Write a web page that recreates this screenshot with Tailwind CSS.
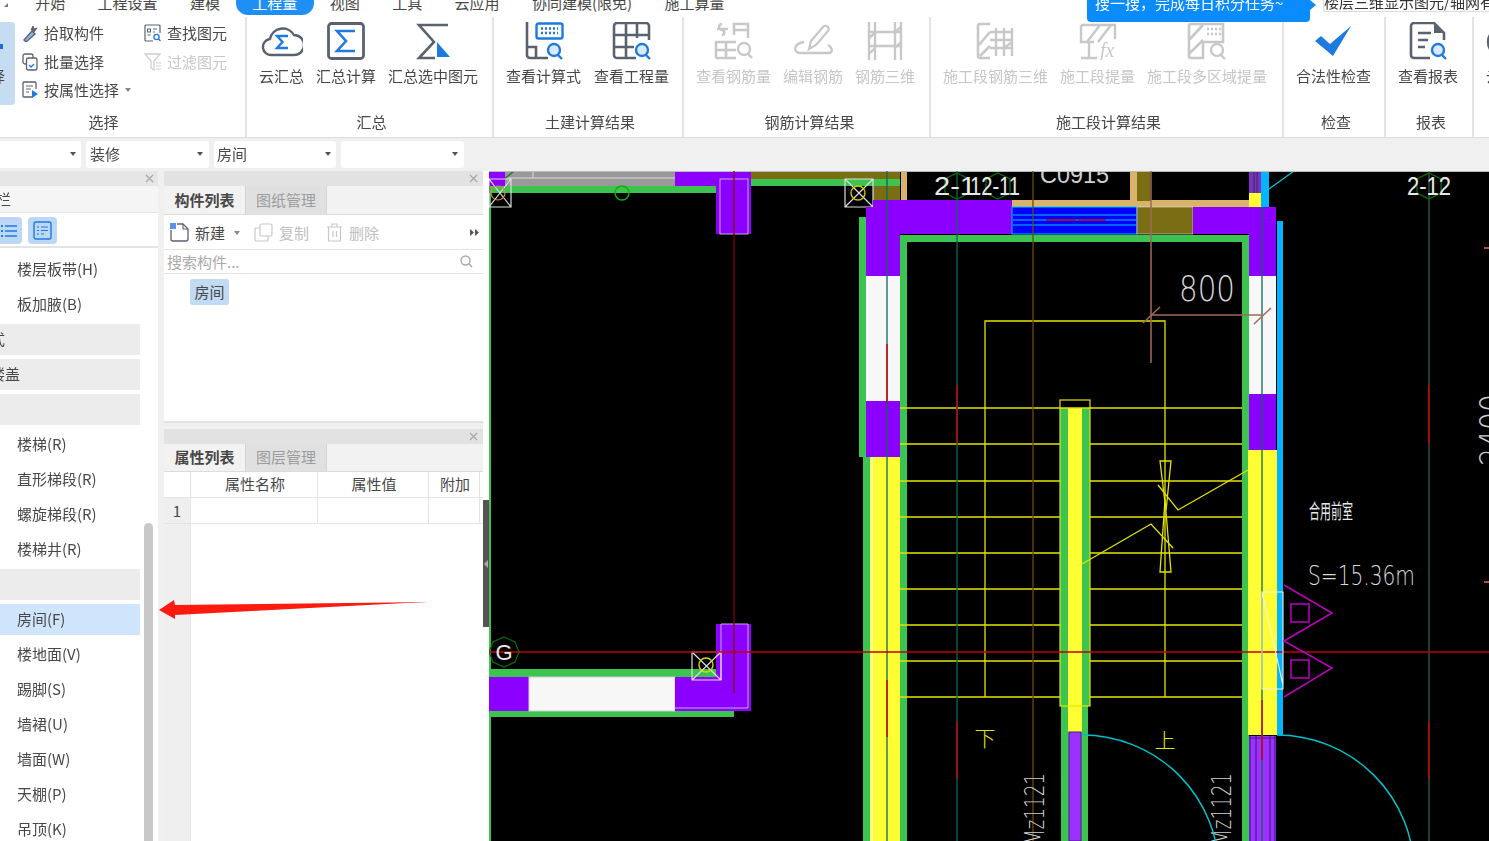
<!DOCTYPE html>
<html>

<head>
    <meta charset="UTF-8">
    <script src="https://cdn.jsdelivr.net/npm/@tailwindcss/browser@4"></script>
</head>

<body class="relative h-[841px] w-[1489px] overflow-hidden bg-[#f0f0f0] text-[15px] leading-[20px] text-[#484848] blur-[0.35px] font-['Noto_Sans_CJK_SC','Liberation_Sans',sans-serif]">

    <!-- Menu tabs -->
    <div class="relative -mt-[9px] flex h-[23px] items-center bg-white pl-[19px] whitespace-nowrap">
        <span class="absolute left-[4px] top-[12px] h-0 w-0 border-b-[4px] border-l-[4px] border-b-[#777] border-l-transparent"></span>
        <span class="px-[16.2px]">开始</span>
        <span class="px-[16.2px]">工程设置</span>
        <span class="px-[16.2px]">建模</span>
        <span class="rounded-b-[12px] bg-[#1f8ff5] px-[16.2px] py-[2px] text-white">工程量</span>
        <span class="px-[16.2px]">视图</span>
        <span class="px-[16.2px]">工具</span>
        <span class="px-[16.2px]">云应用</span>
        <span class="px-[16.2px]">协同建模(限免)</span>
        <span class="px-[16.2px]">施工算量</span>
    </div>

    <!-- Ribbon -->
    <div class="flex h-[124px] border-b border-[#dcdcdc] bg-white pt-[3px] whitespace-nowrap">
        <!-- Selection group -->
        <div class="-ml-10 flex w-[287px] shrink-0 flex-col border-r-2 border-[#e4e4e4]">
            <div class="flex h-[92px] pt-[5px]">
                <div class="flex h-[83px] w-[55px] flex-col items-end rounded-[4px] bg-[#c6dcf3] pt-[22px]">
                    <span class="mr-[12px] mb-[17px] h-[5px] w-[3px] bg-[#1f6fd0]"></span>
                    <span class="mr-[10px] text-[#484848]">择</span>
                </div>
                <div class="ml-[7px] flex w-[122px] flex-col gap-[8.5px] pt-[1px]">
                    <div class="flex h-5 items-center gap-[6px]">
                        <svg class="h-[18px] w-[16px]" viewBox="0 0 16 18" fill="none"><path d="M2 16l8-9 3 3-9 8z" fill="#8fb8e8" stroke="#5a6270" stroke-width="1.4"/><path d="M9 6l2-4 1 3 3-1-3 4" fill="#5a6270" stroke="#5a6270"/></svg>
                        <span>拾取构件</span>
                    </div>
                    <div class="flex h-5 items-center gap-[6px]">
                        <svg class="h-[18px] w-[16px]" viewBox="0 0 16 18" fill="none"><rect x="1" y="1" width="10" height="10" rx="2" stroke="#5a6270" stroke-width="1.3"/><rect x="4.5" y="5" width="10.5" height="12" rx="2" fill="#fff" stroke="#5a6270" stroke-width="1.3"/><path d="M7 12l2 2 3-3" stroke="#1f7ae0" stroke-width="1.3"/></svg>
                        <span>批量选择</span>
                    </div>
                    <div class="flex h-5 items-center gap-[6px]">
                        <svg class="h-[18px] w-[16px]" viewBox="0 0 16 18" fill="none"><path d="M11 16H2a1 1 0 0 1-1-1V2a1 1 0 0 1 1-1h11a1 1 0 0 1 1 1v6" stroke="#5a6270" stroke-width="1.3"/><path d="M4 5h7M4 8h5M4 11h3" stroke="#5a6270" stroke-width="1.2"/><path d="M10 9l6 4-6 4z" fill="#1f7ae0"/></svg>
                        <span class="flex items-center gap-[6px]">按属性选择<span class="h-0 w-0 border-x-[3px] border-t-[4px] border-x-transparent border-t-[#888]"></span></span>
                    </div>
                </div>
                <div class="flex flex-col gap-[8.5px] pt-[1px]">
                    <div class="flex h-5 items-center gap-[5px]">
                        <svg class="h-[18px] w-[18px]" viewBox="0 0 18 18" fill="none"><path d="M16 9V2a1 1 0 0 0-1-1H2a1 1 0 0 0-1 1v14a1 1 0 0 0 1 1h7" stroke="#5a6270" stroke-width="1.2"/><path d="M3.5 5h3v3h-3zM9 5h4M3.5 11h3M9 8h2" stroke="#5a6270" stroke-width="1.1"/><circle cx="12.5" cy="13" r="2.6" stroke="#1f7ae0" stroke-width="1.3"/><path d="M14.5 15l2 2" stroke="#1f7ae0" stroke-width="1.3"/></svg>
                        <span>查找图元</span>
                    </div>
                    <div class="flex h-5 items-center gap-[5px] text-[#c6c6c6]">
                        <svg class="h-[18px] w-[18px]" viewBox="0 0 18 18" fill="none"><path d="M1 1h15l-6 7v9l-3-2V8z" stroke="#cfcfcf" stroke-width="1.3"/><path d="M12 10h5M12 13h5M12 16h5" stroke="#cfcfcf" stroke-width="1.2"/></svg>
                        <span>过滤图元</span>
                    </div>
                </div>
            </div>
            <div class="pl-[2px] pt-[3px] text-center">选择</div>
        </div>

        <!-- Summary group -->
        <div class="flex w-[247px] shrink-0 flex-col border-r-2 border-[#e4e4e4]">
            <div class="flex h-[92px] gap-3 pl-3 pt-[5px]">
                <div class="flex flex-col items-center">
                    <svg class="mb-[6px] h-[38px] w-[42px]" viewBox="0 0 42 38" fill="none"><path d="M11 33a8 8 0 0 1-2-16A13 13 0 0 1 33 13a10 10 0 0 1 0 20z" stroke="#5a6270" stroke-width="2.4"/><path d="M27 14H16l5.500 6-5.500 6h11" stroke="#1f7ae0" stroke-width="2.400"/></svg>
                    <span>云汇总</span>
                </div>
                <div class="flex flex-col items-center">
                    <svg class="mb-[6px] h-[38px] w-[38px]" viewBox="0 0 38 38" fill="none"><rect x="1.500" y="1.500" width="35" height="35" rx="3" stroke="#5a6270" stroke-width="2.800"/><path d="M28 9H10l9 10-9 10h18" stroke="#1f7ae0" stroke-width="2.600"/></svg>
                    <span>汇总计算</span>
                </div>
                <div class="flex flex-col items-center">
                    <svg class="mb-[6px] h-[38px] w-[36px]" viewBox="0 0 36 38" fill="none"><path d="M33 3H4l15 17L4 36h16" stroke="#5a6270" stroke-width="2.600"/><path d="M22 20l13 15H22z" fill="#1f7ae0"/></svg>
                    <span>汇总选中图元</span>
                </div>
            </div>
            <div class="pl-[4px] pt-[3px] text-center">汇总</div>
        </div>

        <!-- Civil results -->
        <div class="flex w-[190px] shrink-0 flex-col border-r-2 border-[#e4e4e4]">
            <div class="flex h-[92px] gap-[13px] pl-3 pt-[5px]">
                <div class="flex flex-col items-center">
                    <svg class="mb-[6px] h-[38px] w-[40px]" viewBox="0 0 40 38" fill="none"><path d="M3 0v33a3 3 0 0 0 3 3h18M3 25h9v11" stroke="#5a6270" stroke-width="2.600"/><rect x="12.500" y="1.500" width="26" height="15" rx="2" stroke="#1f7ae0" stroke-width="2.400"/><path d="M17 6.500h17M17 11h17" stroke="#1f7ae0" stroke-width="2.400" stroke-dasharray="2 2"/><circle cx="30" cy="28" r="6" fill="#dbe9fa" stroke="#1f7ae0" stroke-width="2.400"/><path d="M34 33l4 4" stroke="#1f7ae0" stroke-width="2.400"/></svg>
                    <span>查看计算式</span>
                </div>
                <div class="flex flex-col items-center">
                    <svg class="mb-[6px] h-[38px] w-[40px]" viewBox="0 0 40 38" fill="none"><path d="M24 36H5a3 3 0 0 1-3-3V4a3 3 0 0 1 3-3h29a3 3 0 0 1 3 3v14M2 13h35M2 25h20M14 1v35M25 1v15" stroke="#5a6270" stroke-width="2.600"/><circle cx="30" cy="28" r="6" fill="#dbe9fa" stroke="#1f7ae0" stroke-width="2.400"/><path d="M34 33l4 4" stroke="#1f7ae0" stroke-width="2.400"/></svg>
                    <span>查看工程量</span>
                </div>
            </div>
            <div class="pl-[4px] pt-[3px] text-center">土建计算结果</div>
        </div>

        <!-- Rebar results -->
        <div class="flex w-[247px] shrink-0 flex-col border-r-2 border-[#e4e4e4]">
            <div class="flex h-[92px] gap-3 pl-3 pt-[5px] text-[#c6c6c6]">
                <div class="flex flex-col items-center">
                    <svg class="mb-[6px] h-[38px] w-[40px]" viewBox="0 0 40 38" fill="none"><path d="M3 7h11M8 2a3 3 0 0 0 0 6c3 0 3 5 0 5M20 13V2h14v14M20 8h14M2 36V20h20M2 28h20M12 20v16M2 36h20" stroke="#c8c8c8" stroke-width="2.600"/><circle cx="30" cy="27" r="6" stroke="#c8c8c8" stroke-width="2.400"/><path d="M34 32l4 4" stroke="#c8c8c8" stroke-width="2.400"/></svg>
                    <span>查看钢筋量</span>
                </div>
                <div class="flex flex-col items-center">
                    <svg class="mb-[6px] h-[38px] w-[40px]" viewBox="0 0 40 38" fill="none"><path d="M16 27l2-8L30 5a3 3 0 0 1 5 4L23 23z" stroke="#c8c8c8" stroke-width="2.200"/><path d="M11 20c-12 2-10 11-4 11h28c6 0 4-6 0-8" stroke="#c8c8c8" stroke-width="2.400"/></svg>
                    <span>编辑钢筋</span>
                </div>
                <div class="flex flex-col items-center">
                    <svg class="mb-[6px] h-[38px] w-[40px]" viewBox="0 0 40 38" fill="none"><path d="M4 0v38M36 0v38M30 0v38M10 0v38M4 10h32M4 24h32M4 16l6-5M30 10l6-5M4 32l6-6M30 26l6-6" stroke="#c8c8c8" stroke-width="2.400"/></svg>
                    <span>钢筋三维</span>
                </div>
            </div>
            <div class="pl-[6px] pt-[3px] text-center">钢筋计算结果</div>
        </div>

        <!-- Construction stage results -->
        <div class="flex w-[353px] shrink-0 flex-col border-r-2 border-[#e4e4e4]">
            <div class="flex h-[92px] gap-3 pl-3 pt-[5px] text-[#c6c6c6]">
                <div class="flex flex-col items-center">
                    <svg class="mb-[6px] h-[38px] w-[40px]" viewBox="0 0 40 38" fill="none"><path d="M14 36H4a2 2 0 0 1-2-2V4a2 2 0 0 1 2-2h10M2 24L14 10M4 34L14 24" stroke="#c8c8c8" stroke-width="2.600"/><path d="M14 10h22M14 18h22M14 26h22M20 6v28M28 6v28M36 6v28M28 26l8-6" stroke="#c8c8c8" stroke-width="2.400"/></svg>
                    <span>施工段钢筋三维</span>
                </div>
                <div class="flex flex-col items-center">
                    <svg class="mb-[6px] h-[38px] w-[40px]" viewBox="0 0 40 38" fill="none"><path d="M3 3h34v14M3 3v17h13M9 20L22 3M20 20L33 3M3 36h16M11 20v16" stroke="#c8c8c8" stroke-width="2.400"/><text x="22" y="35" font-family="Liberation Serif" font-style="italic" font-size="20" fill="#c8c8c8">fx</text></svg>
                    <span>施工段提量</span>
                </div>
                <div class="flex flex-col items-center">
                    <svg class="mb-[6px] h-[38px] w-[40px]" viewBox="0 0 40 38" fill="none"><path d="M16 36H4a2 2 0 0 1-2-2V4a2 2 0 0 1 2-2h32v18H16zM2 18L16 3M2 32L16 18" stroke="#c8c8c8" stroke-width="2.600"/><path d="M20 7h14M20 12h14" stroke="#c8c8c8" stroke-width="2.400" stroke-dasharray="2 2"/><circle cx="30" cy="28" r="6" stroke="#c8c8c8" stroke-width="2.400"/><path d="M34 33l4 4" stroke="#c8c8c8" stroke-width="2.400"/></svg>
                    <span>施工段多区域提量</span>
                </div>
            </div>
            <div class="pl-[4px] pt-[3px] text-center">施工段计算结果</div>
        </div>

        <!-- Check -->
        <div class="flex w-[102px] shrink-0 flex-col border-r-2 border-[#e4e4e4]">
            <div class="flex h-[92px] pl-3 pt-[5px]">
                <div class="flex flex-col items-center">
                    <svg class="mb-[6px] h-[38px] w-[40px]" viewBox="0 0 40 38"><path d="M1 19l6-5 9 8L37 4 19 34z" fill="#1f7ae0"/></svg>
                    <span>合法性检查</span>
                </div>
            </div>
            <div class="pl-[4px] pt-[3px] text-center">检查</div>
        </div>

        <!-- Report -->
        <div class="flex w-[88px] shrink-0 flex-col border-r-2 border-[#e4e4e4]">
            <div class="flex h-[92px] pl-3 pt-[5px]">
                <div class="flex flex-col items-center">
                    <svg class="mb-[6px] h-[38px] w-[40px]" viewBox="0 0 40 38" fill="none"><path d="M22 36H6a3 3 0 0 1-3-3V4a3 3 0 0 1 3-3h20l10 10v7" stroke="#5a6270" stroke-width="2.600"/><path d="M26 1v10h10" fill="#5a6270"/><path d="M10 11h13M10 18h10M10 25h7" stroke="#5a6270" stroke-width="2.400"/><circle cx="30" cy="28" r="6" fill="#dbe9fa" stroke="#1f7ae0" stroke-width="2.400"/><path d="M34 33l4 4" stroke="#1f7ae0" stroke-width="2.400"/></svg>
                    <span>查看报表</span>
                </div>
            </div>
            <div class="pl-[4px] pt-[3px] text-center">报表</div>
        </div>

        <div class="flex flex-1 flex-col overflow-hidden pl-3 pt-[5px]">
            <svg class="mb-[6px] h-[38px] w-[40px] shrink-0" viewBox="0 0 40 38" fill="none"><circle cx="16" cy="20" r="14" stroke="#5a6270" stroke-width="2.400"/></svg>
            <span>云检查</span>
        </div>
    </div>

    <!-- Floor / type selectors -->
    <div class="flex h-[32px] items-center gap-[5px] pl-0">
        <div class="-ml-4 flex h-[27px] w-[97px] items-center justify-end rounded-[3px] bg-white pr-[5px]"><span class="h-0 w-0 border-x-[3px] border-t-[4px] border-x-transparent border-t-[#555]"></span></div>
        <div class="flex h-[27px] w-[123px] items-center justify-between rounded-[3px] bg-white pl-1 pr-[6px]">装修<span class="h-0 w-0 border-x-[3px] border-t-[4px] border-x-transparent border-t-[#555]"></span></div>
        <div class="flex h-[27px] w-[122px] items-center justify-between rounded-[3px] bg-white pl-[3px] pr-[5px]">房间<span class="h-0 w-0 border-x-[3px] border-t-[4px] border-x-transparent border-t-[#555]"></span></div>
        <div class="flex h-[27px] w-[123px] items-center justify-end rounded-[3px] bg-white pr-[6px]"><span class="h-0 w-0 border-x-[3px] border-t-[4px] border-x-transparent border-t-[#555]"></span></div>
    </div>

    <!-- Main area -->
    <div class="flex h-[671px] pt-[1px]">
        <!-- Navigation panel -->
        <div class="flex w-[158px] shrink-0 flex-col bg-white">
            <div class="flex h-[15px] items-center justify-end bg-[#e6e6e6] pr-[4px] text-[#a8a8a8]">
                <svg class="h-[9px] w-[9px]" viewBox="0 0 9 9"><path d="M1 1l7 7M8 1L1 8" stroke="#a8a8a8" stroke-width="1.300"/></svg>
            </div>
            <div class="flex h-[27px] items-center border-b border-[#e4e4e4] bg-[#f5f5f5]"><span class="-ml-[4px]">栏</span></div>
            <div class="flex h-[35px] items-center gap-[6px] border-b-2 border-[#e4e4e4] pt-[2px]">
                <div class="flex h-[27px] w-[22px] items-center justify-end rounded-r-[4px] bg-[#bcd8f6] pr-[5px]">
                    <svg class="h-[16px] w-[16px]" viewBox="0 0 16 16"><path d="M0 3h2M0 8h2M0 13h2" stroke="#1f7ae0" stroke-width="2"/><path d="M4 3h12M4 8h12M4 13h12" stroke="#1f7ae0" stroke-width="1.400"/></svg>
                </div>
                <div class="flex h-[27px] w-[29px] items-center justify-center rounded-[4px] bg-[#bcd8f6]">
                    <svg class="h-[19px] w-[19px]" viewBox="0 0 19 19" fill="none"><rect x="1" y="1" width="17" height="17" rx="2" stroke="#1f7ae0" stroke-width="1.400"/><path d="M4 6h2M8 6h7M4 9.500h2M8 9.500h7M4 13h2M8 13h3" stroke="#1f7ae0" stroke-width="1.200"/></svg>
                </div>
            </div>
            <div class="flex min-h-0 flex-1 overflow-hidden">
                <div class="flex w-[140px] shrink-0 flex-col gap-[4px] pt-[6px]">
                    <div class="flex h-[31px] shrink-0 items-center pb-[2px] pl-[17px]">楼层板带(H)</div>
                    <div class="flex h-[31px] shrink-0 items-center pb-[2px] pl-[17px]">板加腋(B)</div>
                    <div class="flex h-[31px] shrink-0 items-center bg-[#ececec] pb-[2px]"><span class="-ml-[10px]">式</span></div>
                    <div class="flex h-[31px] shrink-0 items-center justify-start bg-[#ececec] pb-[2px]"><span class="-ml-[10px]">楼盖</span></div>
                    <div class="h-[31px] shrink-0 bg-[#ececec]"></div>
                    <div class="flex h-[31px] shrink-0 items-center pb-[2px] pl-[17px]">楼梯(R)</div>
                    <div class="flex h-[31px] shrink-0 items-center pb-[2px] pl-[17px]">直形梯段(R)</div>
                    <div class="flex h-[31px] shrink-0 items-center pb-[2px] pl-[17px]">螺旋梯段(R)</div>
                    <div class="flex h-[31px] shrink-0 items-center pb-[2px] pl-[17px]">楼梯井(R)</div>
                    <div class="h-[31px] shrink-0 bg-[#ececec]"></div>
                    <div class="flex h-[31px] shrink-0 items-center bg-[#cfe5fb] pb-[2px] pl-[17px]">房间(F)</div>
                    <div class="flex h-[31px] shrink-0 items-center pb-[2px] pl-[17px]">楼地面(V)</div>
                    <div class="flex h-[31px] shrink-0 items-center pb-[2px] pl-[17px]">踢脚(S)</div>
                    <div class="flex h-[31px] shrink-0 items-center pb-[2px] pl-[17px]">墙裙(U)</div>
                    <div class="flex h-[31px] shrink-0 items-center pb-[2px] pl-[17px]">墙面(W)</div>
                    <div class="flex h-[31px] shrink-0 items-center pb-[2px] pl-[17px]">天棚(P)</div>
                    <div class="flex h-[31px] shrink-0 items-center pb-[2px] pl-[17px]">吊顶(K)</div>
                </div>
                <div class="ml-1 mt-[275px] h-[400px] w-[9px] rounded-[5px] bg-[#c8c8c8]"></div>
            </div>
        </div>

        <div class="w-[6px] shrink-0"></div>

        <!-- Component list and properties -->
        <div class="flex w-[319px] shrink-0 flex-col">
            <div class="flex h-[15px] items-center justify-end bg-[#e2e2e2] pr-[5px]">
                <svg class="h-[9px] w-[9px]" viewBox="0 0 9 9"><path d="M1 1l7 7M8 1L1 8" stroke="#a8a8a8" stroke-width="1.300"/></svg>
            </div>
            <div class="flex h-[29px] border-b border-[#dcdcdc] bg-[#f2f2f2]">
                <div class="flex w-[81px] items-center justify-center font-bold">构件列表</div>
                <div class="flex w-[82px] items-center justify-center border-x border-[#d4d4d4] bg-[#e0e0e0] text-[#9c9c9c]">图纸管理</div>
            </div>
            <div class="flex h-[35px] items-center border-b border-[#e4e4e4] bg-white pl-[6px] pt-[1px]">
                <svg class="h-[19px] w-[19px]" viewBox="0 0 19 19" fill="none"><path d="M1 7v9a2 2 0 0 0 2 2h13a2 2 0 0 0 2-2V6l-5-5H7" stroke="#5a6270" stroke-width="1.300"/><path d="M13 1v5h5" stroke="#5a6270" stroke-width="1.100"/><rect x="0" y="0" width="6" height="6" fill="#5b93ea"/></svg>
                <span class="ml-[6px]">新建</span>
                <span class="ml-[9px] h-0 w-0 border-x-[3px] border-t-[4px] border-x-transparent border-t-[#888]"></span>
                <svg class="ml-[14px] h-[19px] w-[19px]" viewBox="0 0 19 19" fill="none"><rect x="6" y="1" width="12" height="12" rx="1.500" stroke="#c8c8c8" stroke-width="1.200"/><path d="M6 5H2a1 1 0 0 0-1 1v11a1 1 0 0 0 1 1h11a1 1 0 0 0 1-1v-4" stroke="#c8c8c8" stroke-width="1.200"/></svg>
                <span class="ml-[6px] text-[#c0c0c0]">复制</span>
                <svg class="ml-[17px] h-[19px] w-[17px]" viewBox="0 0 17 19" fill="none"><path d="M1 4h15M6 4V1h5v3M2.500 4v14h12V4M7 8v6M10.500 8v6" stroke="#c8c8c8" stroke-width="1.200"/></svg>
                <span class="ml-[6px] text-[#c0c0c0]">删除</span>
                <div class="ml-auto mr-[3px] flex h-[23px] w-[12px] items-center justify-center rounded-[3px] bg-white">
                    <svg class="h-[7px] w-[9px]" viewBox="0 0 9 7"><path d="M0 0l4 3.500L0 7zM5 0l4 3.500L5 7z" fill="#555"/></svg>
                </div>
            </div>
            <div class="flex h-[24px] items-center justify-between border-b border-[#e4e4e4] bg-white pl-[3px] pr-[10px] text-[#aaa]">
                <span>搜索构件...</span>
                <svg class="h-[13px] w-[13px]" viewBox="0 0 13 13" fill="none"><circle cx="5.500" cy="5.500" r="4.500" stroke="#a8a8a8" stroke-width="1.400"/><path d="M9 9l3 3" stroke="#a8a8a8" stroke-width="1.400"/></svg>
            </div>
            <div class="h-[149px] border-b-2 border-[#e2e2e2] bg-white pl-[26px] pt-[5px]">
                <div class="flex h-[26px] w-[39px] items-center justify-center rounded-[3px] bg-[#c2daf3]">房间</div>
            </div>
            <div class="h-[6px]"></div>
            <div class="flex h-[15px] items-center justify-end bg-[#e2e2e2] pr-[5px]">
                <svg class="h-[9px] w-[9px]" viewBox="0 0 9 9"><path d="M1 1l7 7M8 1L1 8" stroke="#a8a8a8" stroke-width="1.300"/></svg>
            </div>
            <div class="flex h-[28px] border-b border-[#dcdcdc] bg-[#f2f2f2]">
                <div class="flex w-[81px] items-center justify-center pb-[2px] font-bold">属性列表</div>
                <div class="flex w-[82px] items-center justify-center border-x border-[#d4d4d4] bg-[#e0e0e0] pb-[2px] text-[#9c9c9c]">图层管理</div>
            </div>
            <div class="flex min-h-0 flex-1 flex-col bg-white">
                <div class="flex h-[26px] shrink-0 border-b border-[#e4e4e4]">
                    <div class="w-[27px] border-r border-[#e4e4e4]"></div>
                    <div class="flex w-[127px] items-center justify-center border-r border-[#e4e4e4] pb-[2px] pl-[2px]">属性名称</div>
                    <div class="flex w-[111px] items-center justify-center border-r border-[#e4e4e4] pb-[2px] pl-[2px]">属性值</div>
                    <div class="flex w-[51px] items-center justify-center border-r border-[#e4e4e4] pb-[2px] pl-[2px]">附加</div>
                </div>
                <div class="flex h-[26px] shrink-0 border-b border-[#e4e4e4]">
                    <div class="flex w-[27px] items-center justify-center border-r border-[#e4e4e4] bg-[#efefef]">1</div>
                    <div class="w-[127px] border-r border-[#e4e4e4]"></div>
                    <div class="w-[111px] border-r border-[#e4e4e4]"></div>
                    <div class="w-[51px] border-r border-[#e4e4e4]"></div>
                </div>
                <div class="w-[27px] flex-1 border-r border-[#e4e4e4] bg-[#efefef]"></div>
            </div>
        </div>

        <!-- Splitter -->
        <div class="flex w-[6px] shrink-0 flex-col bg-white">
            <div class="mt-[329px] flex h-[127px] items-center justify-center bg-[#555]">
                <span class="h-0 w-0 border-y-[4px] border-r-[4px] border-y-transparent border-r-[#aaa]"></span>
            </div>
        </div>

        <!-- CAD drawing -->
        <div class="min-w-0 flex-1 bg-black">
            <svg class="block h-[670px] w-[1000px]" viewBox="489 171 1000 670" font-family="Liberation Sans">
                <!-- upper left room edge -->
                <rect x="505" y="171" width="170" height="15" fill="#999"/>
                <path d="M489 178h186M533 171v7" stroke="#ddd" stroke-width="1"/>
                <path d="M494 176l8 5 12-10" fill="none" stroke="#1d7a2a" stroke-width="1.500"/>
                <rect x="489" y="171" width="16" height="15" fill="#8b00ff"/>
                <rect x="675" y="171" width="76" height="15" fill="#8b00ff"/>
                <rect x="716" y="171" width="35" height="63" fill="#8b00ff"/>
                <rect x="720" y="179" width="28" height="55" fill="none" stroke="#c9a8e8"/>
                <rect x="490" y="186" width="226" height="7" fill="#3cc350"/>
                <rect x="489" y="193" width="2" height="648" fill="#3cc350"/>
                <rect x="751" y="171" width="149" height="8" fill="#7a6e14"/>
                <rect x="751" y="179" width="149" height="7" fill="#3cc350"/>
                <rect x="873" y="186" width="27" height="14" fill="#7a6e14"/>
                <rect x="901" y="171" width="6" height="30" fill="#d9b36c"/>
                <path d="M489 179h22v28h-22zM489 179l22 28M511 179l-22 28" fill="none" stroke="#ddd" stroke-width="1.200"/>
                <circle cx="498" cy="193" r="7" fill="none" stroke="#d98a4a" stroke-width="1.200"/>
                <circle cx="622" cy="193" r="7" fill="none" stroke="#0cb10c" stroke-width="1.400"/>
                <path d="M845 179h28v28h-28zM845 179l28 28M873 179l-28 28" fill="none" stroke="#ddd" stroke-width="1.200"/>
                <circle cx="858" cy="193" r="7" fill="none" stroke="#d8c800" stroke-width="1.400"/>

                <!-- stair room walls, top -->
                <rect x="1012" y="200" width="238" height="7" fill="#d9b36c"/>
                <rect x="1130" y="171" width="7" height="30" fill="#d9b36c"/>
                <rect x="1137" y="171" width="13" height="30" fill="#7a6e14"/>
                <rect x="873" y="200" width="139" height="8" fill="#8b00ff"/>
                <rect x="866" y="207" width="146" height="27" fill="#8b00ff"/>
                <rect x="866" y="207" width="34" height="69" fill="#8b00ff"/>
                <rect x="1012" y="207" width="125" height="27" fill="#0000ff" stroke="#00c8ff"/>
                <path d="M1013 215h123M1013 220h123M1013 225h123" stroke="#00c8ff"/>
                <path d="M1046 220h30M1078 220h28" stroke="#c00000" stroke-width="1.400"/>
                <rect x="1137" y="207" width="56" height="27" fill="#7a6e14" stroke="#e0e0e0" stroke-width=".6"/>
                <rect x="1193" y="207" width="83" height="27" fill="#8b00ff"/>
                <rect x="1249" y="207" width="27" height="69" fill="#8b00ff"/>
                <rect x="1249" y="171" width="12" height="22" fill="#7a30c8"/>
                <rect x="1249" y="193" width="12" height="14" fill="#ffff33"/>
                <rect x="1261" y="171" width="8" height="36" fill="#00b4ff"/>
                <path d="M1254 171v22M1257 171v22" stroke="#333"/>
                <path d="M1262 194l32-23" stroke="#00c8e0" stroke-width="1.200"/>

                <!-- left wall -->
                <rect x="859" y="217" width="7" height="240" fill="#3cc350"/>
                <rect x="900" y="235" width="7" height="222" fill="#3cc350"/>
                <rect x="900" y="235" width="349" height="7" fill="#3cc350"/>
                <rect x="866" y="276" width="34" height="125" fill="#f7f7f7"/>
                <rect x="866" y="401" width="34" height="56" fill="#8b00ff"/>
                <rect x="863" y="457" width="44" height="384" fill="#3cc350"/>
                <rect x="870" y="457" width="30" height="384" fill="#ffff33"/>
                <path d="M872 457v384" stroke="#fff" stroke-width="1.200"/>

                <!-- right wall -->
                <rect x="1242" y="235" width="7" height="606" fill="#3cc350"/>
                <rect x="1249" y="276" width="27" height="118" fill="#f7f7f7"/>
                <rect x="1249" y="394" width="27" height="56" fill="#8b00ff"/>
                <rect x="1248" y="450" width="29" height="285" fill="#ffff33"/>
                <rect x="1277" y="221" width="6" height="514" fill="#00b4ff"/>
                <rect x="1249" y="736" width="27" height="105" fill="#9b30ff"/>
                <path d="M1250 736v105M1256 736v105M1270 736v105M1275 736v105M1249 738h27" stroke="#4a1a90" stroke-width="1.200"/>

                <!-- middle wall -->
                <rect x="1060" y="408" width="30" height="298" fill="#3cc350"/>
                <rect x="1061" y="706" width="27" height="135" fill="#3cc350"/>
                <rect x="1068" y="408" width="14" height="324" fill="#ffff33"/>
                <rect x="1069" y="732" width="12" height="109" fill="#9b30ff" stroke="#4a1a90"/>
                <rect x="1060" y="400" width="30" height="306" fill="none" stroke="#e4e400" stroke-width="1.200"/>

                <!-- lower left wall -->
                <rect x="489" y="669" width="227" height="8" fill="#3cc350"/>
                <rect x="489" y="711" width="245" height="6" fill="#3cc350"/>
                <rect x="489" y="677" width="40" height="34" fill="#8b00ff"/>
                <rect x="529" y="677" width="146" height="34" fill="#f7f7f7" stroke="#d0d0d0"/>
                <rect x="675" y="677" width="76" height="34" fill="#8b00ff"/>
                <rect x="716" y="624" width="35" height="87" fill="#8b00ff"/>
                <path d="M721 624h27v84h-73M721 624v56" fill="none" stroke="#c9a8e8"/>
                <path d="M692 652h29v28h-29zM692 652l29 28M721 652l-29 28" fill="none" stroke="#ddd" stroke-width="1.200"/>
                <circle cx="706" cy="665" r="7" fill="none" stroke="#d8d800" stroke-width="1.400"/>

                <!-- stair treads -->
                <path d="M900 408h342M900 444h160M1090 444h152M900 481h160M1090 481h152M900 517h160M1090 517h152M900 553h160M1090 553h152M900 589h160M1090 589h152M900 625h160M1090 625h152M900 661h160M1090 661h152M900 697h160M1090 697h152" stroke="#e4e400" stroke-width="1.300"/>
                <path d="M985 697V321h180v376" fill="none" stroke="#e4e400" stroke-width="1.300"/>
                <path d="M1160 572l5-72 6 72zM1160 461h11l-5 50zM1248 470l-70 40-20-25M1082 564l69-40 22 24" fill="none" stroke="#e4e400" stroke-width="1.300"/>
                <text x="985" y="746" text-anchor="middle" font-family="Noto Sans CJK SC" font-weight="300" font-size="21" fill="#e4e400">下</text>
                <text x="1165" y="748" text-anchor="middle" font-family="Noto Sans CJK SC" font-weight="300" font-size="21" fill="#e4e400">上</text>

                <!-- axis lines -->
                <path d="M489 171.500h1000" stroke="#bbb"/>
                <path d="M734 171v522" stroke="#800000" stroke-width="1.300"/>
                <path d="M957 171v670M887 171v670M1262 207v634" stroke="#0c6a56" stroke-width="1.300"/>
                <path d="M1429 171v670" stroke="#3f7a55" stroke-width="1"/>
                <path d="M1033 171v670" stroke="#6b4a0a" stroke-width="1.300"/>
                <path d="M957 385v59M957 722v57M1429 385v59M1429 722v57M887 344v59M887 680v57M1262 700v60" stroke="#d00000" stroke-width="1.400"/>
                <path d="M489 652h1000" stroke="#c00000" stroke-width="1.300"/>
                <path d="M1484 248h5M1484 582h5" stroke="#e07050" stroke-width="1.300"/>

                <!-- dimension 800 -->
                <path d="M1151 171v192M1151 315h111M1143 323l17-16M1254 324l17-16" fill="none" stroke="#a06a5a" stroke-width="1.500"/>
                <text x="1179" y="301" font-family="DejaVu Sans" font-weight="200" font-size="35" textLength="56" lengthAdjust="spacingAndGlyphs" fill="#d8d8d8">800</text>
                <text x="1040" y="183" font-size="24" textLength="69" lengthAdjust="spacingAndGlyphs" fill="#cfcfcf">C0915</text>

                <!-- axis bubbles -->
                <path d="M957 173l12 6v14l-12 6-12-6v-14zM998 173l12 6v14l-12 6-12-6v-14zM1429 173l12 6v14l-12 6-12-6v-14z" fill="none" stroke="#0a6a0a" stroke-width="1.300"/>
                <text x="934" y="195" font-size="25" textLength="42" lengthAdjust="spacingAndGlyphs" fill="#e8e8e8">2-1</text>
                <text x="970" y="195" font-size="25" textLength="50" lengthAdjust="spacingAndGlyphs" fill="#e8e8e8">12-11</text>
                <text x="1407" y="195" font-size="25" textLength="44" lengthAdjust="spacingAndGlyphs" fill="#e8e8e8">2-12</text>
                <path d="M504 637l11 5 4 10-4 10-11 5-11-5-4-10 4-10z" fill="none" stroke="#0a6a0a" stroke-width="1.300"/>
                <text x="504" y="660" text-anchor="middle" font-size="22" fill="#e8e8e8">G</text>

                <!-- fire hydrant symbols -->
                <path d="M1262 592h21v97h-21zM1262 592l21 93" fill="none" stroke="#f0f0f0" stroke-width="1.100"/>
                <path d="M1284 585l48 28-48 28 48 27-48 29" fill="none" stroke="#c000c0" stroke-width="1.500"/>
                <rect x="1291" y="604" width="18" height="18" fill="none" stroke="#c000c0" stroke-width="1.500"/>
                <rect x="1291" y="660" width="18" height="18" fill="none" stroke="#c000c0" stroke-width="1.500"/>

                <!-- room text -->
                <text x="1309" y="519" font-size="20" textLength="44" lengthAdjust="spacingAndGlyphs" font-family="Noto Sans CJK SC" fill="#e8e8e8">合用前室</text>
                <text x="1308" y="585" font-family="DejaVu Sans" font-weight="200" font-size="27" textLength="107" lengthAdjust="spacingAndGlyphs" fill="#d8d8d8">S=15.36m</text>
                <text transform="translate(1044 845) rotate(-90)" font-family="DejaVu Sans" font-weight="200" font-size="26" textLength="72" lengthAdjust="spacingAndGlyphs" fill="#d0d0d0">Mz1121</text>
                <text transform="translate(1231 845) rotate(-90)" font-family="DejaVu Sans" font-weight="200" font-size="26" textLength="72" lengthAdjust="spacingAndGlyphs" fill="#d0d0d0">Mz1121</text>
                <text transform="translate(1505 466) rotate(-90)" font-family="DejaVu Sans" font-weight="200" font-size="35" textLength="72" lengthAdjust="spacingAndGlyphs" fill="#d0d0d0">2400</text>

                <!-- doors -->
                <path d="M1082 735A137 137 0 0 1 1219 872M1277 735A137 137 0 0 1 1414 872" fill="none" stroke="#00c0c8" stroke-width="1.500"/>
            </svg>
        </div>
    </div>

    <!-- Tooltip over the tab row -->
    <div class="absolute left-[1087px] top-0 flex h-[22px] w-[223px] items-start rounded-b-[4px] bg-[#0a8cff] pl-2 text-white">
        <span class="-mt-[7px]">搜一搜，完成每日积分任务~</span>
    </div>
    <span class="absolute left-[1310px] top-0 h-0 w-0 border-y-[5px] border-l-[6px] border-y-transparent border-l-[#0a8cff]"></span>
    <div class="absolute left-[1323px] top-0 h-[12px] w-[166px] overflow-hidden rounded-bl-[3px] border-b border-l border-[#ddd] bg-white whitespace-nowrap text-[#333]">
        <span class="-mt-[8px] block">楼层三维显示图元/轴网有</span>
    </div>

    <!-- Red annotation arrow -->
    <svg class="absolute left-[155px] top-[596px] h-[28px] w-[280px]" viewBox="155 596 280 28">
        <path d="M159 610l15-10 1 5 253-3-253 13v4z" fill="#ff1a10"/>
    </svg>
</body>

</html>
